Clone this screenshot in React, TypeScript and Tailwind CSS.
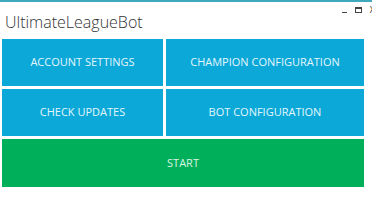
export default function App() {
  return (
    <div className="w-[372px] h-[200px] bg-white overflow-hidden border-t-2 border-[#3fa9bb] font-['Open_Sans',sans-serif]">
      <div className="flex items-start justify-between h-[37px]">
        <div className="pl-[5px] pt-[10px] text-[16px] leading-[20px] text-[#333] font-light">UltimateLeagueBot</div>
        <div className="flex items-center gap-[8px] pt-[3px] pr-0 text-[9px] leading-[10px] text-[#333] mr-[-3px]">
          <span className="block w-[5px] h-[1px] bg-[#444] mt-[5px]" />
          <span className="block w-[7px] h-[6px] border border-[#444] border-t-2" />
          <span>X</span>
        </div>
      </div>
      <div className="ml-[2px] w-[362px] grid grid-cols-[161px_198px] gap-[3px]">
        <Tile label="ACCOUNT SETTINGS" />
        <Tile label="CHAMPION CONFIGURATION" />
        <Tile label="CHECK UPDATES" />
        <Tile label="BOT CONFIGURATION" />
        <button className="col-span-2 h-[48px] bg-[#00af5a] text-[#d8f5e4] text-[11px] uppercase flex items-center justify-center">
          START
        </button>
      </div>
    </div>
  );
}

function Tile({ label }: { label: string }) {
  return (
    <button className="h-[47px] bg-[#0ba8d8] text-[#e4f6fc] text-[11px] uppercase flex items-center justify-center">
      {label}
    </button>
  );
}
